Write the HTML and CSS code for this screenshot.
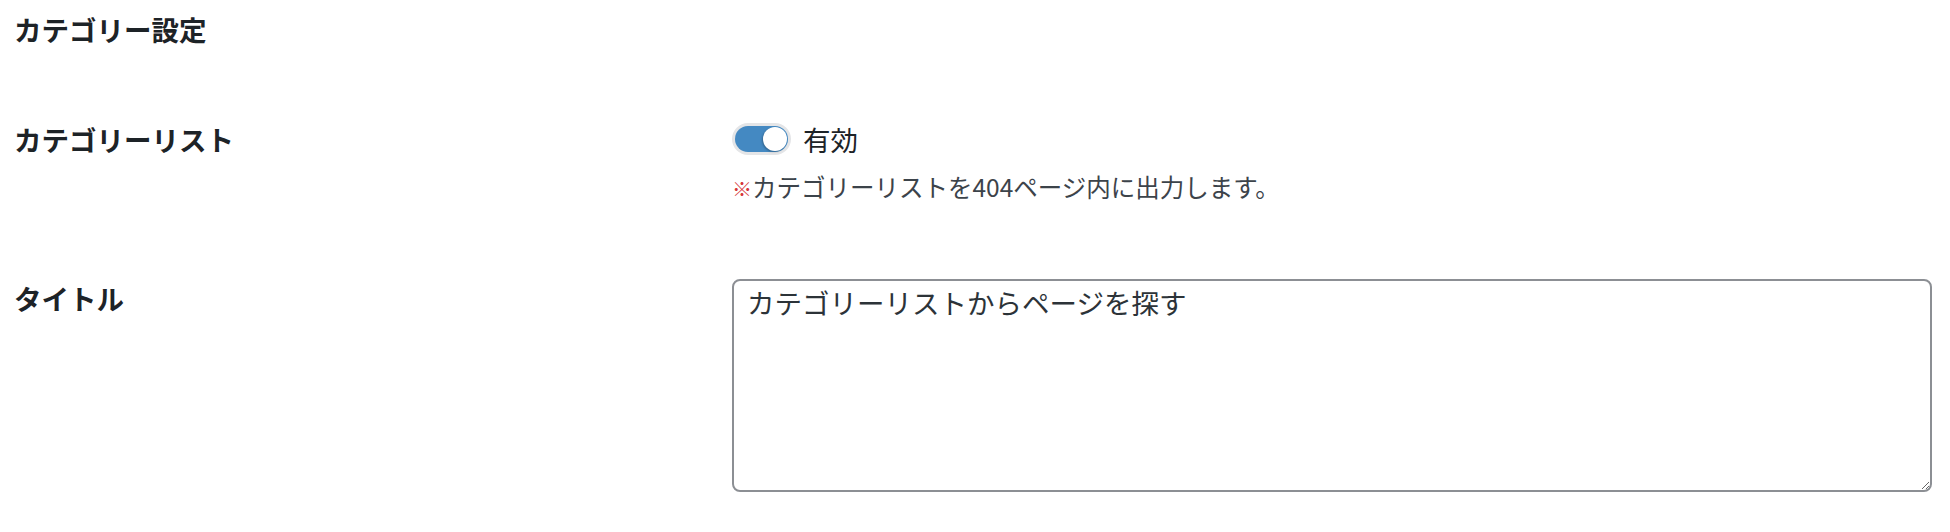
FILE: index.html
```html
<!DOCTYPE html>
<html lang="ja">
<head>
    <meta charset="UTF-8">
    <meta name="viewport" content="width=device-width, initial-scale=1.0">
    <title>カテゴリー設定</title>
    <link rel="stylesheet" href="styles.css">
</head>
<body>
    <div class="settings">
        <h2 class="section-title">カテゴリー設定</h2>

        <div class="form-table">
            <div class="form-row">
                <div class="form-label">カテゴリーリスト</div>
                <div class="form-field">
                    <label class="switch">
                        <input type="checkbox" class="switch-input" checked>
                        <span class="switch-text">有効</span>
                    </label>
                    <p class="note"><span class="note-mark">※</span>カテゴリーリストを404ページ内に出力します。</p>
                </div>
            </div>

            <div class="form-row">
                <div class="form-label">タイトル</div>
                <div class="form-field">
                    <textarea class="title-input">カテゴリーリストからページを探す</textarea>
                </div>
            </div>
        </div>
    </div>
</body>
</html>
```

FILE: styles.css
```css
/* Base styles */
body {
    margin: 0;
    padding: 0 18px 0 14px;
    font-family: "Noto Sans CJK JP", "Noto Sans", sans-serif;
    color: #1d2327;
    background-color: #ffffff;
}

.section-title {
    margin: 0;
    padding-top: 10px;
    font-size: 27.5px;
    line-height: 1.4;
    font-weight: bold;
}

/* Form table */
.form-table {
    display: flex;
    flex-direction: column;
    margin-top: 71px;
    gap: 75px;
}

.form-row {
    display: grid;
    grid-template-columns: 718px 1fr;
}

.form-label {
    font-size: 27.5px;
    line-height: 1.4;
    font-weight: bold;
}

.form-field {
    display: flex;
    flex-direction: column;
    align-items: flex-start;
}

/* Toggle switch */
.switch {
    display: flex;
    align-items: center;
    gap: 15px;
    cursor: pointer;
}

.switch-input {
    appearance: none;
    -webkit-appearance: none;
    position: relative;
    margin: 0 0 0 3px;
    width: 53px;
    height: 26px;
    border-radius: 13px;
    background-color: #c3c4c7;
    box-shadow: 0 0 0 3px #e4e5e7;
    cursor: pointer;
    transition: background-color 0.2s ease;
}

.switch-input::after {
    content: "";
    position: absolute;
    top: 1px;
    left: 2px;
    width: 24px;
    height: 24px;
    border-radius: 50%;
    background-color: #ffffff;
    box-shadow: -1px 1px 2px rgba(0, 0, 0, 0.25);
    transition: left 0.2s ease;
}

.switch-input:checked {
    background-color: #4489c2;
}

.switch-input:checked::after {
    left: 28px;
}

.switch-text {
    font-size: 27.5px;
    line-height: 1.4;
}

.note {
    margin: 12px 0 0;
    font-size: 24.5px;
    line-height: 1.4;
    color: #3c434a;
}

.note-mark {
    color: #d63638;
    font-size: 20px;
}

/* Title textarea */
.title-input {
    box-sizing: border-box;
    width: 100%;
    height: 213px;
    margin: 0;
    padding: 2px 13px;
    border: 2px solid #8c8f94;
    border-radius: 8px;
    font-family: inherit;
    font-size: 27.5px;
    line-height: 1.4;
    color: #2c3338;
}
```
